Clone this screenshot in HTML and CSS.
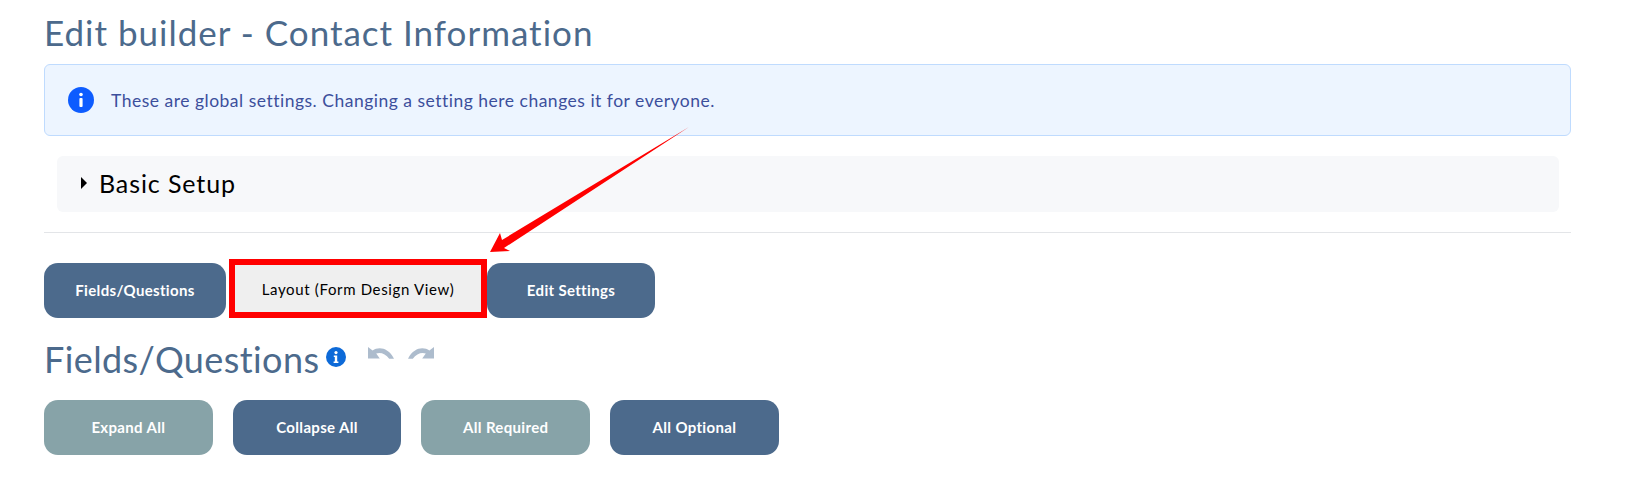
FILE: index.html
```html
<!DOCTYPE html>
<html lang="en">
<head>
  <meta charset="UTF-8" />
  <title>Edit builder - Contact Information</title>
  <link rel="stylesheet" href="styles.css">
</head>
<body>
  <div class="page">
    <h1 class="page-title">Edit builder - Contact Information</h1>

    <div class="alert">
      <svg class="alert-icon" viewBox="0 0 26 26" width="26" height="26">
        <circle cx="13" cy="13" r="13" fill="#0d5cff"/>
        <circle cx="13" cy="7.5" r="1.8" fill="#fff"/>
        <rect x="11.4" y="11" width="3.2" height="9" rx="1" fill="#fff"/>
      </svg>
      <span>These are global settings. Changing a setting here changes it for everyone.</span>
    </div>

    <div class="accordion">
      <span class="caret"></span>
      <span>Basic Setup</span>
    </div>

    <hr class="divider">

    <div class="tabs">
      <button class="btn btn-blue tab-first">Fields/Questions</button>
      <button class="btn btn-active">Layout (Form Design View)</button>
      <button class="btn btn-blue tab-last">Edit Settings</button>
    </div>

    <div class="section-head">
      <h2>Fields/Questions</h2>
      <svg class="help-icon" viewBox="0 0 20 20" width="20" height="20">
        <circle cx="10" cy="10" r="10" fill="#0d6ad8"/>
        <circle cx="10" cy="5.6" r="1.6" fill="#fff"/>
        <path d="M7.8 8.4h3.4v6h1.2v1.6H7.6v-1.6h1.2V10H7.8z" fill="#fff"/>
      </svg>
      <svg class="history-icon" viewBox="0 0 26 12" width="26" height="12">
        <path d="M0 0l4.6 3.6C10.400 -0.400 20 0.200 26 11.800L21.200 11.800C17.600 6.800 12.400 5 8.200 6.600L11.800 11.400H0z" fill="#adbccd"/>
      </svg>
      <svg class="history-icon" viewBox="0 0 26 12" width="26" height="12">
        <path d="M26 0l-4.600 3.600C15.600 -0.400 6 0.200 0 11.800L4.800 11.800C8.400 6.800 13.600 5 17.800 6.600L14.200 11.400H26z" fill="#adbccd"/>
      </svg>
    </div>

    <div class="actions">
      <button class="btn btn-teal">Expand All</button>
      <button class="btn btn-blue">Collapse All</button>
      <button class="btn btn-teal">All Required</button>
      <button class="btn btn-blue">All Optional</button>
    </div>
  </div>

  <!-- annotation drawn over the screenshot -->
  <svg class="arrow" viewBox="0 0 1634 485" width="1634" height="485">
    <path d="M689 127L504 248L510 251L490 252L500 233L502 240z" fill="#ff0000"/>
  </svg>
</body>
</html>
```

FILE: styles.css
```css
body {
  margin: 0;
  background: #fff;
  font-family: 'Lato', sans-serif;
  color: #4c6a8c;
}

.page {
  padding: 0 63px 0 44px;
}

.page-title {
  margin: 0;
  height: 64px;
  line-height: 64px;
  font-size: 35px;
  font-weight: 400;
  letter-spacing: 1px;
}

.alert {
  display: flex;
  align-items: center;
  gap: 17px;
  height: 72px;
  box-sizing: border-box;
  padding-left: 23px;
  background: #edf5ff;
  border: 1px solid #bfdbfe;
  border-radius: 6px;
  font-size: 17.5px;
  letter-spacing: 0.5px;
  color: #3c4f9c;
}

.accordion {
  display: flex;
  align-items: center;
  gap: 12px;
  height: 56px;
  margin: 20px 12px 0 13px;
  padding: 0 0 2px 24px;
  box-sizing: border-box;
  background: #f7f8fa;
  border-radius: 6px;
  font-size: 25px;
  letter-spacing: 0.9px;
  color: #000;
}

.caret {
  width: 0;
  height: 0;
  border-top: 6px solid transparent;
  border-bottom: 6px solid transparent;
  border-left: 6px solid #000;
  margin-top: -1px;
}

.divider {
  margin: 20px 0 0;
  border: none;
  border-top: 1px solid #e3e5e8;
}

.tabs {
  display: flex;
  align-items: flex-end;
  height: 59px;
  margin-top: 26px;
}

.btn {
  height: 55px;
  padding: 0 0 2px;
  border: none;
  border-radius: 14px;
  font-family: 'Lato', sans-serif;
  font-size: 15px;
  font-weight: 700;
  letter-spacing: 0.33px;
  color: #fff;
}

.btn-blue {
  background: #4c6a8c;
}

.btn-teal {
  background: #87a3a8;
}

.btn-active {
  width: 258px;
  height: 59px;
  margin-left: 3px;
  padding: 0;
  box-sizing: border-box;
  background: #efefef;
  border: 6px solid #ff0000;
  border-radius: 0;
  font-weight: 400;
  letter-spacing: 0.65px;
  color: #000;
}

.tab-first {
  width: 182px;
}

.tab-last {
  width: 168px;
}

.section-head {
  display: flex;
  align-items: flex-start;
  height: 82px;
}

.section-head h2 {
  margin: 0;
  width: 282px;
  font-size: 36px;
  line-height: 82px;
  font-weight: 400;
  letter-spacing: 0.4px;
}

.help-icon {
  margin-top: 29px;
}

.history-icon {
  margin: 29px 0 0 14px;
}

.help-icon + .history-icon {
  margin-left: 22px;
}

.actions {
  display: flex;
  gap: 20px;
}

.actions .btn {
  width: 168.7px;
}

.arrow {
  position: absolute;
  top: 0;
  left: 0;
  pointer-events: none;
}
```
